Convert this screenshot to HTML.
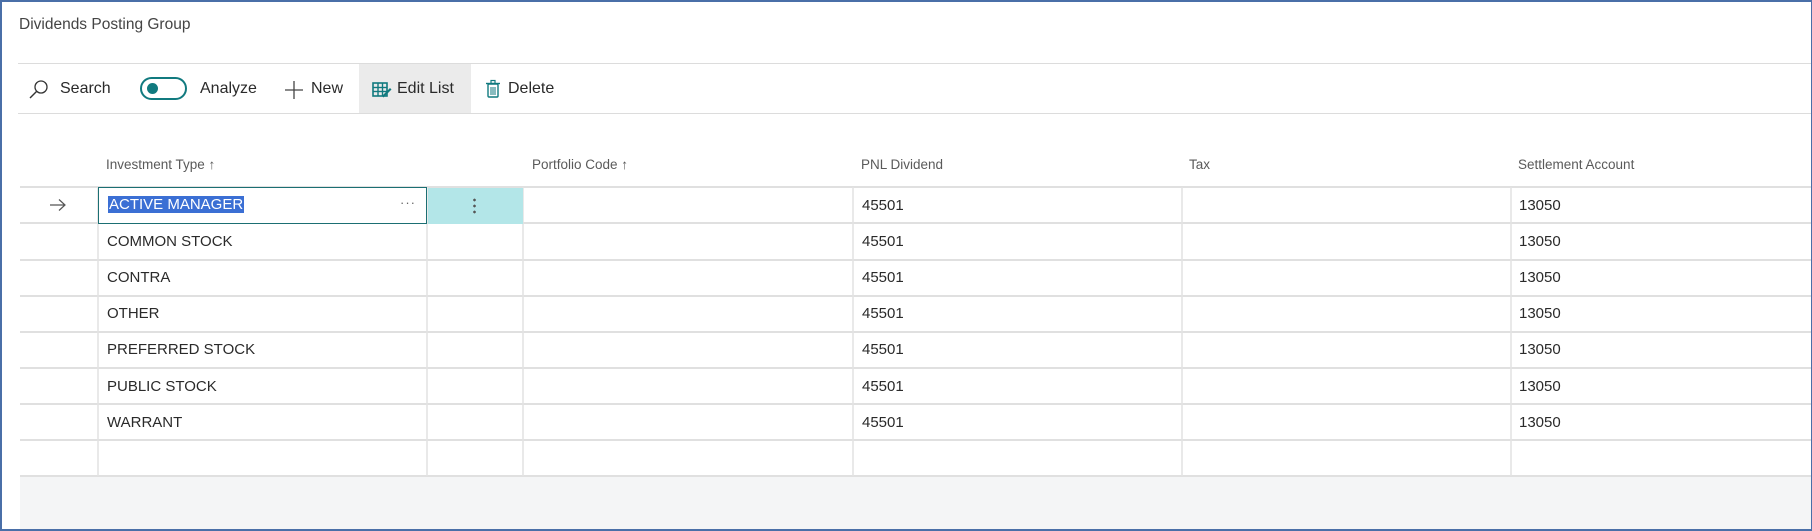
<!DOCTYPE html>
<html><head><meta charset="utf-8"><style>
*{margin:0;padding:0;box-sizing:border-box}
body{width:1812px;height:531px;overflow:hidden;background:#fff;font-family:"Liberation Sans",sans-serif;color:#212121;position:relative}
.frame{position:absolute;left:0;top:0;width:1812px;height:531px;border:2px solid #4a6fa8;border-right-width:1px;border-bottom-width:2px;pointer-events:none;z-index:10}
.abs{position:absolute;white-space:nowrap}
.title{left:19px;top:16px;font-size:15.5px;color:#444}
.hl{position:absolute;left:18px;right:0;height:1px;background:#dcdcdc}
.tb{top:80px;font-size:16px;color:#2a2a2a}
.hdr{top:157px;font-size:13.5px;color:#5a5a5a}
.cell{font-size:15px;color:#2a2a2a}
.gray{position:absolute;left:20px;right:0;top:477px;bottom:0;background:#f4f5f6}
</style></head><body>
<div class="abs title">Dividends Posting Group</div>
<div class="hl" style="top:63px"></div>
<div class="abs" style="left:359px;top:64px;width:112px;height:49px;background:#ebebeb"></div>
<div class="hl" style="top:113px"></div>
<svg class="abs" style="left:28px;top:79px" width="22" height="22" viewBox="0 0 22 22"><circle cx="13" cy="8" r="6" fill="none" stroke="#333" stroke-width="1.3"/><line x1="8.5" y1="12.5" x2="2" y2="19" stroke="#333" stroke-width="1.4"/></svg>
<div class="abs tb" style="left:60px">Search</div>
<div class="abs" style="left:140px;top:77px;width:47px;height:23px;border:2px solid #117a7f;border-radius:12px"></div>
<div class="abs" style="left:147px;top:83px;width:11px;height:11px;background:#117a7f;border-radius:50%"></div>
<div class="abs tb" style="left:200px">Analyze</div>
<svg class="abs" style="left:284px;top:80px" width="20" height="20"><line x1="10" y1="1" x2="10" y2="19" stroke="#444" stroke-width="1.3"/><line x1="1" y1="10" x2="19" y2="10" stroke="#444" stroke-width="1.3"/></svg>
<div class="abs tb" style="left:311px">New</div>
<svg class="abs" style="left:372px;top:81px" width="20" height="18" viewBox="0 0 20 18"><rect x="1" y="2" width="14" height="13" fill="none" stroke="#117a7f" stroke-width="1.6"/><line x1="1" y1="6.5" x2="15" y2="6.5" stroke="#117a7f" stroke-width="1.4"/><line x1="1" y1="10.5" x2="15" y2="10.5" stroke="#117a7f" stroke-width="1.4"/><line x1="6" y1="2" x2="6" y2="15" stroke="#117a7f" stroke-width="1.4"/><line x1="10.5" y1="2" x2="10.5" y2="15" stroke="#117a7f" stroke-width="1.4"/><path d="M10 15 L18 7 L19.5 8.5 L11.5 16.5 Z" fill="#117a7f"/></svg>
<div class="abs tb" style="left:397px">Edit List</div>
<svg class="abs" style="left:485px;top:79px" width="16" height="20" viewBox="0 0 16 20"><rect x="3" y="5" width="10" height="13" rx="1" fill="none" stroke="#117a7f" stroke-width="1.4"/><line x1="1" y1="4.5" x2="15" y2="4.5" stroke="#117a7f" stroke-width="1.4"/><rect x="6" y="1.5" width="4" height="3" fill="none" stroke="#117a7f" stroke-width="1.2"/><line x1="6" y1="8" x2="6" y2="16" stroke="#117a7f"/><line x1="8" y1="8" x2="8" y2="16" stroke="#117a7f"/><line x1="10" y1="8" x2="10" y2="16" stroke="#117a7f"/></svg>
<div class="abs tb" style="left:508px">Delete</div>

<div class="abs hdr" style="left:106px">Investment Type ↑</div>
<div class="abs hdr" style="left:532px">Portfolio Code ↑</div>
<div class="abs hdr" style="left:861px">PNL Dividend</div>
<div class="abs hdr" style="left:1189px">Tax</div>
<div class="abs hdr" style="left:1518px">Settlement Account</div>

<svg class="abs" style="left:0;top:186px" width="1812" height="292">
<g stroke="#e0e0e0" stroke-width="2">
<line x1="20" y1="1" x2="1812" y2="1"/><line x1="20" y1="37" x2="1812" y2="37"/><line x1="20" y1="74" x2="1812" y2="74"/><line x1="20" y1="110" x2="1812" y2="110"/><line x1="20" y1="146" x2="1812" y2="146"/><line x1="20" y1="182" x2="1812" y2="182"/><line x1="20" y1="218" x2="1812" y2="218"/><line x1="20" y1="254" x2="1812" y2="254"/><line x1="20" y1="290" x2="1812" y2="290"/>
</g>
<g stroke="#e2e2e2" stroke-width="1.5">
<line x1="98" y1="1" x2="98" y2="290"/><line x1="427" y1="1" x2="427" y2="290"/><line x1="523" y1="1" x2="523" y2="290"/><line x1="853" y1="1" x2="853" y2="290"/><line x1="1182" y1="1" x2="1182" y2="290"/><line x1="1511" y1="1" x2="1511" y2="290"/>
</g>
</svg>
<div class="gray"></div>
<div class="abs" style="left:428px;top:188px;width:95px;height:36px;background:#b3e6e8"></div>
<div class="abs" style="left:98px;top:187px;width:329px;height:37px;border:1.5px solid #1b6f73;background:#fff"></div>
<div class="abs cell" style="left:108px;top:196px;background:#3b6fd4;color:#fff;padding:0 1px">ACTIVE MANAGER</div>
<div class="abs" style="left:400px;top:195px;font-size:13px;color:#666;letter-spacing:1px">···</div>
<div class="abs" style="left:473px;top:197px;width:3px;height:18px;background:radial-gradient(circle,#555 1.2px,transparent 1.5px) 0 0/3px 6px"></div>
<svg class="abs" style="left:49px;top:198px" width="18" height="14"><path d="M1 7 H16 M10 1.5 L16 7 L10 12.5" fill="none" stroke="#555" stroke-width="1.2"/></svg>

<div class="abs cell" style="left:107px;top:233px">COMMON STOCK</div>
<div class="abs cell" style="left:107px;top:269px">CONTRA</div>
<div class="abs cell" style="left:107px;top:305px">OTHER</div>
<div class="abs cell" style="left:107px;top:341px">PREFERRED STOCK</div>
<div class="abs cell" style="left:107px;top:378px">PUBLIC STOCK</div>
<div class="abs cell" style="left:107px;top:414px">WARRANT</div>

<div class="abs cell" style="left:862px;top:197px">45501</div>
<div class="abs cell" style="left:862px;top:233px">45501</div>
<div class="abs cell" style="left:862px;top:269px">45501</div>
<div class="abs cell" style="left:862px;top:305px">45501</div>
<div class="abs cell" style="left:862px;top:341px">45501</div>
<div class="abs cell" style="left:862px;top:378px">45501</div>
<div class="abs cell" style="left:862px;top:414px">45501</div>
<div class="abs cell" style="left:1519px;top:197px">13050</div>
<div class="abs cell" style="left:1519px;top:233px">13050</div>
<div class="abs cell" style="left:1519px;top:269px">13050</div>
<div class="abs cell" style="left:1519px;top:305px">13050</div>
<div class="abs cell" style="left:1519px;top:341px">13050</div>
<div class="abs cell" style="left:1519px;top:378px">13050</div>
<div class="abs cell" style="left:1519px;top:414px">13050</div>
<div class="frame"></div>
</body></html>
